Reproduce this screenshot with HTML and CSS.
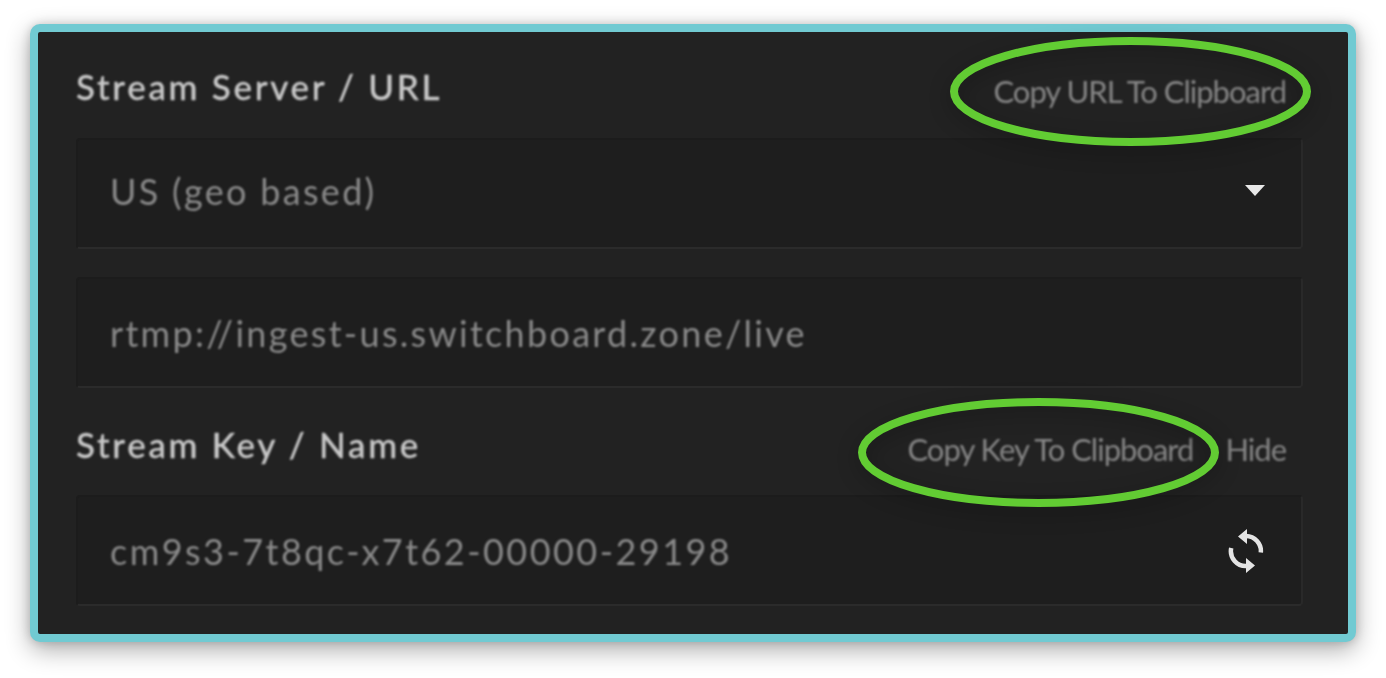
FILE: index.html
```html
<!DOCTYPE html>
<html lang="en">
<head>
<meta charset="utf-8">
<title>Stream settings</title>
<link rel="stylesheet" href="styles.css">
</head>
<body>
<main class="panel">
  <div class="label-row row-url">
    <span class="label">Stream Server / URL</span>
    <div class="actions"><a class="action">Copy URL To Clipboard</a></div>
    <svg class="ring ring-url" viewBox="0 0 361 109" aria-hidden="true"><ellipse cx="180.500" cy="54.500" rx="176.500" ry="50.500"/></svg>
  </div>
  <div class="field field-select">
    <span class="value">US (geo based)</span>
    <svg class="caret" viewBox="0 0 20 12" aria-hidden="true"><path d="M0 0H20L10 11Z"/></svg>
  </div>
  <div class="field field-url">
    <span class="value">rtmp://ingest-us.switchboard.zone/live</span>
  </div>
  <div class="label-row row-key">
    <span class="label">Stream Key / Name</span>
    <div class="actions"><a class="action">Copy Key To Clipboard</a><a class="action">Hide</a></div>
    <svg class="ring ring-key" viewBox="0 0 361 109" aria-hidden="true"><ellipse cx="180.500" cy="54.500" rx="176.500" ry="50.500"/></svg>
  </div>
  <div class="field field-key">
    <span class="value value-key">cm9s3-7t8qc-x7t62-00000-29198</span>
    <svg class="sync" viewBox="0 0 36 44" aria-hidden="true">
      <path class="sync-arc" d="M18 7A15 15 0 0 1 32.800 23.500M3.200 19A15 15 0 0 0 19 37"/>
      <path class="sync-head" d="M19 0V15L10 7.500ZM18 44V29L27 36.500Z"/>
    </svg>
  </div>
</main>
</body>
</html>
```
FILE: styles.css
```css
html, body {
  margin: 0;
  height: 100%;
  background: #fff;
}
body {
  width: 1386px;
  height: 678px;
  overflow: hidden;
  padding: 24px 30px 36px;
  box-sizing: border-box;
  font-family: Lato, "Open Sans", sans-serif;
}
.panel {
  width: 1326px;
  height: 618px;
  box-sizing: border-box;
  border: 8px solid #71cad2;
  border-radius: 10px;
  background: #222;
  padding: 0 45px 0 38px;
  box-shadow: 0 8px 24px rgba(0, 0, 0, .32), 0 0 10px rgba(0, 0, 0, .16);
  overflow: visible;
}
.label-row {
  position: relative;
  display: flex;
  justify-content: space-between;
  align-items: center;
}
.row-url { height: 106px; padding-top: 6px; box-sizing: border-box; }
.row-key { height: 107px; padding-top: 8px; box-sizing: border-box; }
.label {
  font-size: 35px;
  font-weight: 500;
  letter-spacing: 2.7px;
  color: #c8c8c8;
  -webkit-text-stroke: .3px #c8c8c8;
  filter: blur(.8px);
  position: relative;
  top: -2px;
}
.actions {
  display: flex;
  gap: 32px;
  padding-right: 17px;
  position: relative;
  top: 3px;
}
.action {
  font-size: 31px;
  letter-spacing: -1px;
  color: #868686;
  filter: blur(.8px);
}
.field {
  display: flex;
  justify-content: space-between;
  align-items: center;
  box-sizing: border-box;
  background: #1e1e1e;
  border: 2px solid #1c1c1c;
  border-bottom-color: #2b2b2b;
  border-right-color: #292929;
  border-radius: 4px;
  padding: 0 36px 0 32px;
  height: 111px;
}
.field-select { padding-bottom: 6px; }
.field-url { margin-top: 28px; }
.value {
  font-size: 36px;
  letter-spacing: 2.3px;
  color: #8a8a8a;
  filter: blur(.8px);
}
.value-key { letter-spacing: 2.45px; }
.caret {
  width: 20px;
  height: 12px;
  fill: #e8e8e8;
  filter: blur(.6px);
}
.sync {
  width: 36px;
  height: 44px;
  margin-right: 1px;
  filter: blur(.6px);
}
.sync-arc {
  fill: none;
  stroke: #e4e4e4;
  stroke-width: 4.500;
}
.sync-head { fill: #e4e4e4; }
.ring {
  position: absolute;
  width: 361px;
  height: 109px;
  fill: none;
  stroke: #62cc33;
  stroke-width: 8;
  filter: drop-shadow(0 6px 10px rgba(0, 0, 0, .3));
}
.ring-url { right: -8px; top: 5px; }
.ring-key { right: 84px; top: 10px; }
```
